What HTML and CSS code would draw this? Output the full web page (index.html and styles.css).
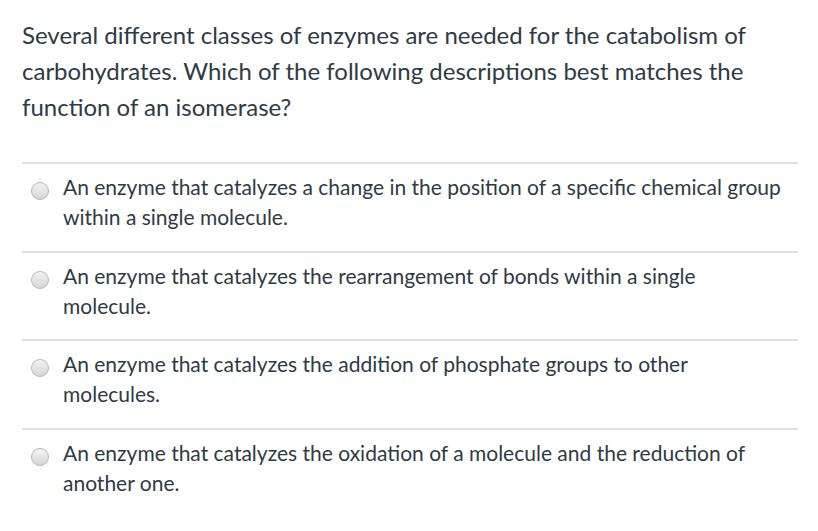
FILE: index.html
```html
<!DOCTYPE html>
<html>
<head>
<meta charset="utf-8">
<link rel="stylesheet" href="styles.css">
</head>
<body>
<div class="quiz">
  <div class="question">Several different classes of enzymes are needed for the catabolism of carbohydrates. Which of the following descriptions best matches the function of an isomerase?</div>
  <div class="answers">
    <label class="answer"><span class="radio"></span><span class="text">An enzyme that catalyzes a change in the position of a specific chemical group within a single molecule.</span></label>
    <label class="answer"><span class="radio"></span><span class="text">An enzyme that catalyzes the rearrangement of bonds within a single molecule.</span></label>
    <label class="answer"><span class="radio"></span><span class="text">An enzyme that catalyzes the addition of phosphate groups to other molecules.</span></label>
    <label class="answer"><span class="radio"></span><span class="text">An enzyme that catalyzes the oxidation of a molecule and the reduction of another one.</span></label>
  </div>
</div>
</body>
</html>
```
FILE: styles.css
```css
html, body {
  margin: 0;
  padding: 0;
  background: #fff;
}
body {
  font-family: Lato, "Noto Sans", sans-serif;
  color: #2d3b45;
}
.quiz {
  width: 776px;
  padding: 17px 0 0 22px;
}
.question {
  font-size: 24px;
  line-height: 36px;
}
.answers {
  margin-top: 37px;
}
.answer {
  display: flex;
  align-items: flex-start;
  border-top: 2px solid #e0e0e0;
  padding: 8px 0 18.5px 9px;
}
.radio {
  flex: none;
  width: 16px;
  height: 16px;
  border: 1px solid #b5b5b5;
  border-radius: 50%;
  background: linear-gradient(#f4f4f4, #d6d6d6);
  margin-top: 10px;
  margin-right: 14px;
}
.text {
  font-size: 21px;
  line-height: 30px;
  padding-right: 15px;
}
```
